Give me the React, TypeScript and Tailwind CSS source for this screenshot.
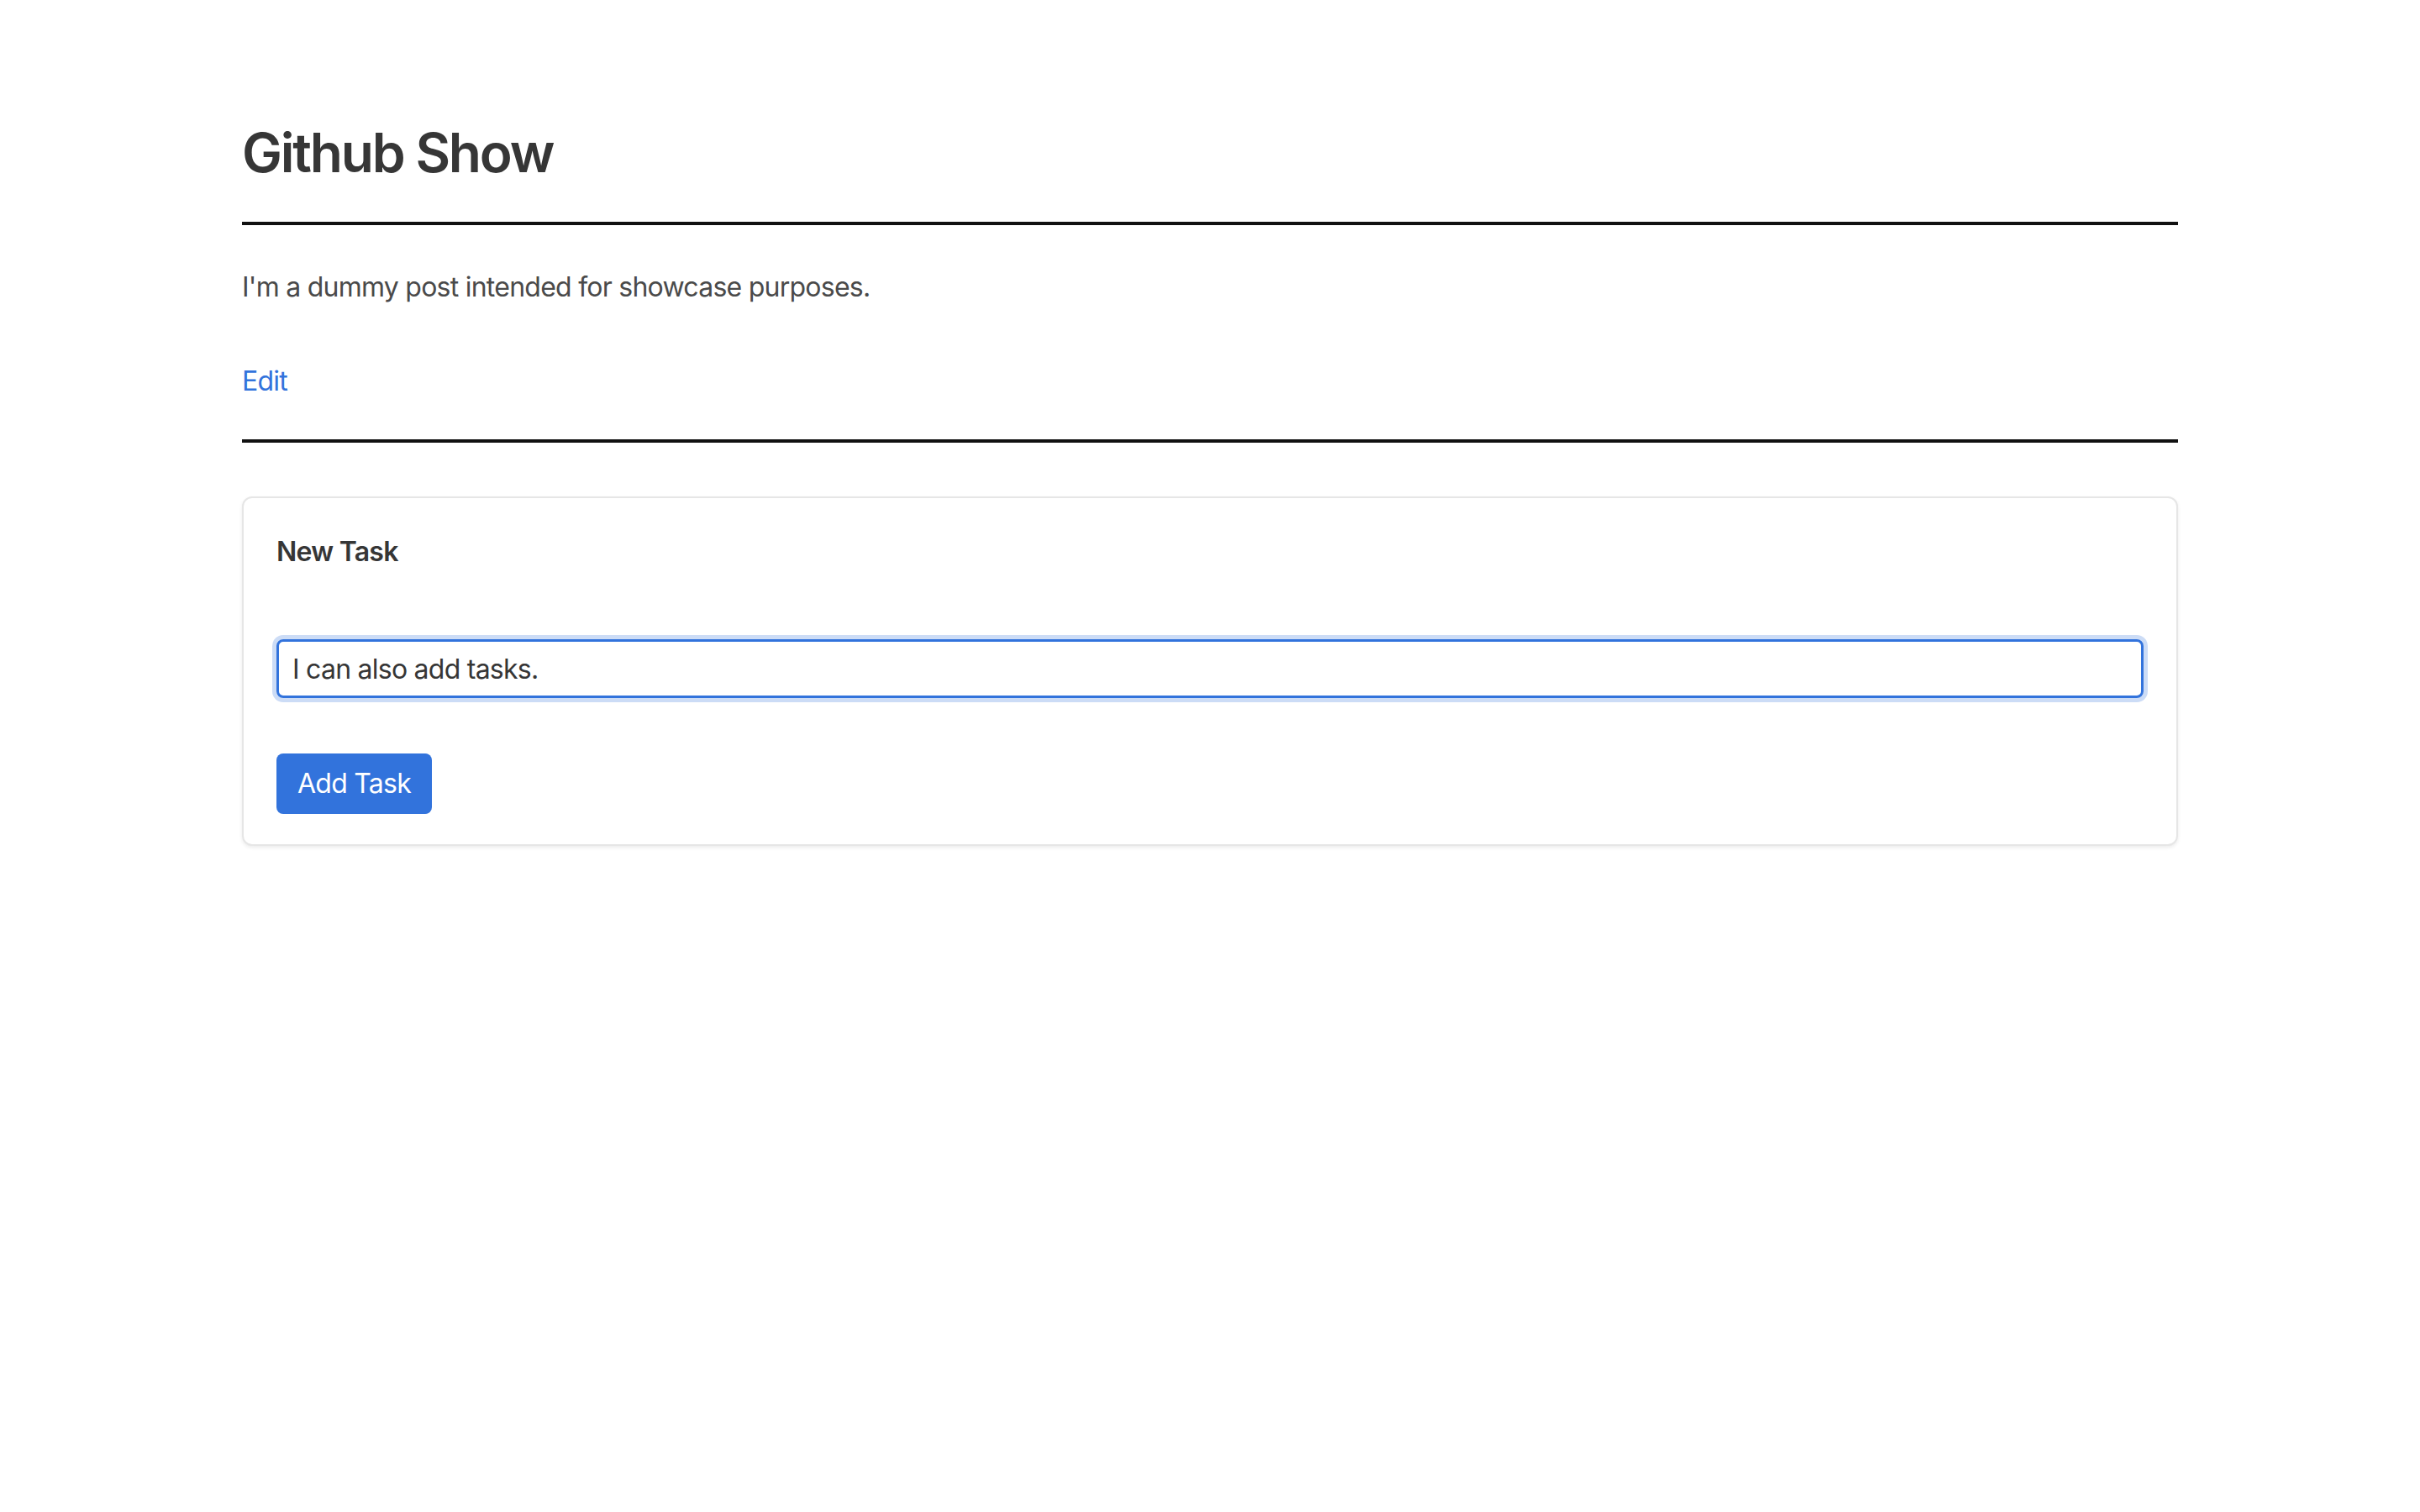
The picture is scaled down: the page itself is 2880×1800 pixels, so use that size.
import React from 'react';

const App = () => {
  return (
    <div className="min-h-screen bg-white font-['Inter','Liberation_Sans',sans-serif] text-[#4a4a4a]">
      <main className="mx-auto w-[2304px] pt-[146px]">
        <h1 className="text-[64px] leading-[72px] font-semibold text-[#363636] tracking-[-2.2px]">Github Show</h1>
        <hr className="mt-[46px] border-0 h-[4px] bg-[#111]" />

        <p className="mt-[50px] text-[32px] leading-[48px] tracking-[-0.75px]">I'm a dummy post intended for showcase purposes.</p>
        <a href="#" className="mt-[64px] block w-fit text-[32px] leading-[48px] tracking-[-0.75px] text-[#3273dc]">Edit</a>

        <hr className="mt-[45px] border-0 h-[4px] bg-[#111]" />

        <div className="mt-[64px] rounded-[12px] border-2 border-[#e6e6e6] bg-white px-[39px] pt-[40px] pb-[36px] shadow-[0_2px_4px_rgba(10,10,10,0.08)]">
          <h2 className="text-[32px] leading-[48px] font-semibold tracking-[-0.75px] text-[#363636]">New Task</h2>
          <div className="mt-[80px]">
            <input
              type="text"
              defaultValue="I can also add tasks."
              className="block w-full h-[70px] rounded-[8px] border-[3px] border-[#3273dc] px-[16px] text-[32px] tracking-[-0.75px] text-[#363636] outline-none shadow-[0_0_0_5px_rgba(50,115,220,0.25)]"
            />
          </div>
          <button className="mt-[66px] block h-[72px] rounded-[8px] bg-[#3273dc] px-[25px] text-[32px] tracking-[-0.75px] text-white">Add Task</button>
        </div>
      </main>
    </div>
  );
};

export default App;
